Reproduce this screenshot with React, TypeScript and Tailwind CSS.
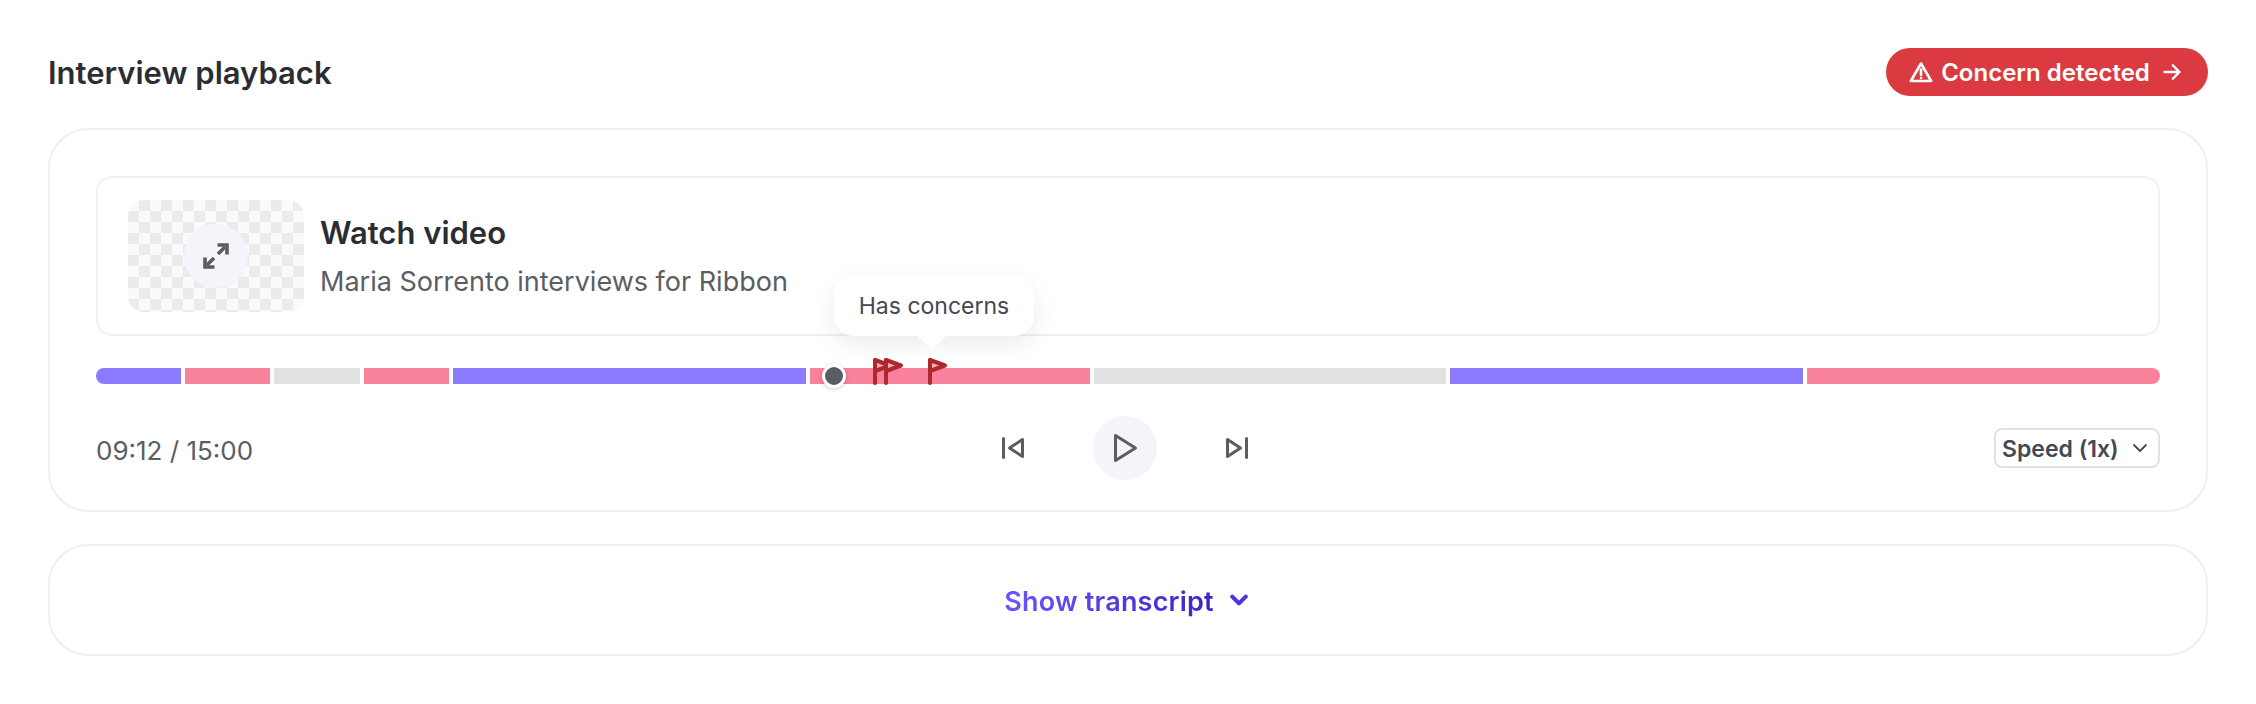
import React from "react";

const segs = [
  { w: "w-[85px]", c: "bg-[#8a7bff]", r: "rounded-l-full" },
  { w: "w-[85px]", c: "bg-[#f8829c]", r: "" },
  { w: "w-[86px]", c: "bg-[#e1e3e2]", r: "" },
  { w: "w-[85px]", c: "bg-[#f8829c]", r: "" },
  { w: "w-[353px]", c: "bg-[#8a7bff]", r: "" },
  { w: "w-[280px]", c: "bg-[#f8829c]", r: "" },
  { w: "w-[352px]", c: "bg-[#e1e3e2]", r: "" },
  { w: "w-[353px]", c: "bg-[#8a7bff]", r: "" },
  { w: "flex-1", c: "bg-[#f8829c]", r: "rounded-r-full" },
];

function Flag({ className }: { className: string }) {
  return (
    <svg viewBox="0 0 24 28" className={className} fill="none" stroke="#b0272e" strokeWidth="4" strokeLinecap="round" strokeLinejoin="round">
      <path d="M3 3v23" />
      <path d="M3 3l15 5.5L3 14z" fill="#f0b4bc" />
    </svg>
  );
}

export default function App() {
  return (
    <div className="min-h-[704px] bg-white px-12 pt-12 text-[#2b2d33] font-['Inter','Liberation_Sans',sans-serif]">
      <div className="flex h-12 items-center justify-between">
        <h1 className="pt-[2px] text-[31px] font-semibold">Interview playback</h1>
        <button className="flex h-12 w-[322px] items-center justify-center gap-2 rounded-full bg-[#dc3a41] pr-[3px] text-[24px] font-semibold text-white">
          <svg viewBox="0 0 24 24" className="h-6 w-6" fill="none" stroke="currentColor" strokeWidth="2.6" strokeLinecap="round" strokeLinejoin="round">
            <path d="M12 3.5 1.8 21h20.4z" />
            <path d="M12 9.5v5.5" />
            <path d="M12 18h.01" />
          </svg>
          <span className="pt-[1px]">Concern detected</span>
          <svg viewBox="0 0 24 24" className="ml-1 h-5 w-5" fill="none" stroke="currentColor" strokeWidth="2.8" strokeLinecap="round" strokeLinejoin="round">
            <path d="M3 12h18M13 4l8 8-8 8" />
          </svg>
        </button>
      </div>

      <section className="mt-8 flex h-[384px] flex-col rounded-[40px] border-2 border-[#f0f0f0] px-[46px] pt-[46px]">
        <div className="flex h-[160px] items-center gap-4 rounded-2xl border-2 border-[#f0f0f0] px-[30px]">
          <div className="flex h-28 w-44 items-center justify-center rounded-2xl bg-[repeating-conic-gradient(#ebebeb_0%_25%,#fafafa_0%_50%)] bg-[length:22px_22px]">
            <div className="flex h-16 w-16 items-center justify-center rounded-full bg-[#f4f5fa]">
              <svg viewBox="0 0 28 28" className="h-7 w-7" fill="none" stroke="#5b5d64" strokeWidth="3.6" strokeLinejoin="miter">
                <path d="M5 23 12 16M16 12l7-7" />
                <path d="M3 15.5V25h9.5" />
                <path d="M15.5 3H25v9.5" />
              </svg>
            </div>
          </div>
          <div className="flex flex-col gap-[15px]">
            <div className="text-[31px] leading-9 font-semibold">Watch video</div>
            <div className="text-[27px] leading-8 text-[#5b5d64]">Maria Sorrento interviews for Ribbon</div>
          </div>
        </div>

        <div className="relative mt-[32px] flex h-4 gap-1">
          {segs.map((s, i) => (
            <div key={i} className={`${s.w} ${s.c} ${s.r}`} />
          ))}
          <div className="absolute left-[726px] top-[-4px] h-6 w-6 rounded-full border-[3px] border-white bg-[#5a5c63] shadow-[0_1px_4px_rgba(0,0,0,0.2)]" />
          <Flag className="absolute left-[776px] top-[-11px] h-7 w-6" />
          <Flag className="absolute left-[787px] top-[-11px] h-7 w-6" />
          <Flag className="absolute left-[831px] top-[-11px] h-7 w-6" />
          <div className="absolute left-[738px] top-[-92px] flex h-[60px] w-[200px] items-center justify-center rounded-[20px] bg-white text-[23px] text-[#434854] shadow-[0_8px_24px_rgba(0,0,0,0.08)]">
            Has concerns
            <div className="absolute bottom-[-10px] left-[88px] h-5 w-5 rotate-45 bg-white" />
          </div>
        </div>

        <div className="mt-[32px] flex items-center justify-between">
          <div className="w-[160px] whitespace-nowrap pt-[4px] text-[26px] text-[#5b5d64]">09:12 / 15:00</div>
          <div className="flex items-center gap-12">
            <button className="flex h-16 w-16 items-center justify-center">
              <svg viewBox="0 0 24 24" className="h-6 w-6" fill="none" stroke="#5b5d64" strokeWidth="3" strokeLinecap="round" strokeLinejoin="round">
                <path d="M2.5 2.5v19M21.5 3.5v17L8.5 12z" />
              </svg>
            </button>
            <button className="flex h-16 w-16 items-center justify-center rounded-full bg-[#f4f5fa]">
              <svg viewBox="0 0 32 32" className="h-8 w-8" fill="none" stroke="#5b5d64" strokeWidth="3" strokeLinecap="round" strokeLinejoin="round">
                <path d="M6.5 3.5v25l20-12.5z" />
              </svg>
            </button>
            <button className="flex h-16 w-16 items-center justify-center">
              <svg viewBox="0 0 24 24" className="h-6 w-6" fill="none" stroke="#5b5d64" strokeWidth="3" strokeLinecap="round" strokeLinejoin="round">
                <path d="M21.5 2.5v19M2.5 3.5v17L15.5 12z" />
              </svg>
            </button>
          </div>
          <button className="flex h-10 w-[166px] items-center justify-between rounded-lg border-2 border-[#e2e2e2] pl-[6px] pr-[10px] text-[23px] font-semibold text-[#434854]">
            <span className="pt-[3px]">Speed (1x)</span>
            <svg viewBox="0 0 16 16" className="h-4 w-4" fill="none" stroke="#434854" strokeWidth="1.8" strokeLinecap="round" strokeLinejoin="round">
              <path d="M2 5l6 6 6-6" />
            </svg>
          </button>
        </div>
      </section>

      <section className="mt-8 flex h-28 items-center justify-center gap-4 rounded-[40px] border-2 border-[#f0f0f0] pr-[4px]">
        <span className="bg-gradient-to-r from-[#6b56ff] to-[#3c22c6] bg-clip-text pt-[4px] text-[27px] font-semibold tracking-[0.2px] text-transparent">Show transcript</span>
        <svg viewBox="0 0 16 16" className="h-[18px] w-[18px]" fill="none" stroke="#4a33e0" strokeWidth="3.6" strokeLinecap="round" strokeLinejoin="round">
          <path d="M2 5l6 6 6-6" />
        </svg>
      </section>
    </div>
  );
}
